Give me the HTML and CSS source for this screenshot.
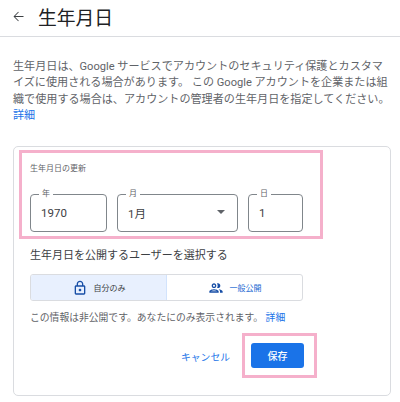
FILE: index.html
```html
<!DOCTYPE html>
<html lang="ja">
<head>
    <meta charset="UTF-8">
    <title>生年月日</title>
    <link rel="stylesheet" href="styles.css">
</head>
<body>
    <header class="top-bar">
        <svg class="back-icon" viewBox="0 0 24 24" width="15" height="15">
            <path d="M20 11.250H6.600l5.900-5.900-1-1L4 12l7.500 7.650 1-1-5.900-5.900H20z"/>
        </svg>
        <h1 class="page-title">生年月日</h1>
    </header>

    <p class="intro">
        生年月日は、Google サービスでアカウントのセキュリティ保護とカスタマイズに使用される場合があります。 この Google アカウントを企業または組織で使用する場合は、アカウントの管理者の生年月日を指定してください。
        <a class="link more-link" href="#">詳細</a>
    </p>

    <section class="card">
        <div class="highlight date-box">
            <div class="date-label">生年月日の更新</div>
            <div class="date-fields">
                <fieldset class="field field-year">
                    <legend>年</legend>
                    <span>1970</span>
                </fieldset>
                <fieldset class="field field-month">
                    <legend>月</legend>
                    <span>1月</span>
                    <i class="caret"></i>
                </fieldset>
                <fieldset class="field field-day">
                    <legend>日</legend>
                    <span>1</span>
                </fieldset>
            </div>
        </div>

        <h2 class="visibility-title">生年月日を公開するユーザーを選択する</h2>

        <div class="toggle">
            <div class="toggle-item active">
                <svg viewBox="0 0 24 24" width="16" height="16">
                    <path d="M18 8h-1V6c0-2.800-2.200-5-5-5S7 3.200 7 6v2H6c-1.100 0-2 .9-2 2v10c0 1.100.9 2 2 2h12c1.100 0 2-.9 2-2V10c0-1.100-.9-2-2-2zM9 6c0-1.700 1.300-3 3-3s3 1.300 3 3v2H9V6zm9 14H6V10h12v10zm-6-3c1.100 0 2-.9 2-2s-.9-2-2-2-2 .9-2 2 .9 2 2 2z"/>
                </svg>
                <span>自分のみ</span>
            </div>
            <div class="toggle-item">
                <svg viewBox="0 0 24 24" width="16" height="16">
                    <path d="M9 13.750c-2.300 0-7 1.200-7 3.500V19h14v-1.750c0-2.300-4.700-3.500-7-3.500zM4.300 17c.8-.6 2.900-1.250 4.700-1.250s3.900.65 4.700 1.250H4.300zM9 12c1.900 0 3.500-1.600 3.500-3.500S10.900 5 9 5 5.500 6.600 5.500 8.500 7.100 12 9 12zm0-5c.8 0 1.500.7 1.500 1.500S9.800 10 9 10s-1.500-.7-1.500-1.500S8.200 7 9 7zm7 6.800c1.200.9 2 2 2 3.450V19h4v-1.750c0-2-3.500-3.200-6-3.450zM15 12c1.900 0 3.500-1.600 3.500-3.500S16.900 5 15 5c-.5 0-1 .1-1.500.3.600.9 1 2 1 3.200s-.4 2.300-1 3.200c.5.200 1 .3 1.500.3z"/>
                </svg>
                <span>一般公開</span>
            </div>
        </div>

        <p class="info">この情報は非公開です。あなたにのみ表示されます。 <a class="link" href="#">詳細</a></p>

        <div class="actions">
            <a class="cancel" href="#">キャンセル</a>
            <div class="highlight save-box">
                <button class="save-btn">保存</button>
            </div>
        </div>
    </section>
</body>
</html>
```

FILE: styles.css
```css
* {
    margin: 0;
    padding: 0;
    box-sizing: border-box;
}

body {
    font-family: 'Roboto', 'Noto Sans CJK JP', sans-serif;
    background: #fff;
    color: #5f6368;
    width: 400px;
    height: 402px;
    overflow: hidden;
}

.top-bar {
    height: 37px;
    display: flex;
    align-items: center;
    padding: 0 0 3px 11px;
    border-bottom: 1px solid #dadce0;
}

.back-icon {
    fill: #3c4043;
}

.page-title {
    margin-left: 12px;
    font-size: 18.8px;
    font-weight: 400;
    color: #202124;
}

.intro {
    margin: 22px 0 0 13px;
    width: 378px;
    font-size: 11.1px;
    line-height: 16.3px;
}

.link {
    color: #1a73e8;
    text-decoration: none;
}

.more-link {
    display: block;
}

.card {
    margin: 22px 0 0 13px;
    width: 378px;
    height: 250px;
    border: 1px solid #dadce0;
    border-radius: 5px;
    padding: 3px 0 0 5px;
}

.highlight {
    border: 3px solid #f5b0cb;
}

.date-box {
    width: 304px;
    height: 89px;
    padding: 10px 0 0 8px;
}

.date-label {
    font-size: 8px;
    line-height: 12px;
}

.date-fields {
    display: flex;
    gap: 10px;
    margin-top: 14px;
}

.field {
    height: 43px;
    border: 1px solid #80868b;
    border-radius: 4px;
    padding: 0 10px;
    display: flex;
    align-items: center;
    font-size: 11.5px;
    color: #3c4043;
    position: relative;
}

.field legend {
    font-size: 8px;
    padding: 0 3px;
    margin-left: -2px;
    line-height: 10px;
    color: #5f6368;
}

.field span {
    margin-top: -5px;
}

.field-year {
    width: 77px;
}

.field-month {
    width: 121px;
}

.field-day {
    width: 55px;
}

.caret {
    position: absolute;
    right: 12px;
    top: 11px;
    border: 4px solid transparent;
    border-top-color: #5f6368;
    border-bottom: 0;
}

.visibility-title {
    margin: 9px 0 0 11px;
    font-size: 11px;
    font-weight: 400;
    line-height: 16px;
    color: #3c4043;
}

.toggle {
    display: flex;
    width: 273px;
    height: 27px;
    margin: 10px 0 0 11px;
    border: 1px solid #dadce0;
    border-radius: 3px;
    overflow: hidden;
}

.toggle-item {
    flex: 1;
    display: flex;
    align-items: center;
    justify-content: center;
    gap: 6px;
    font-size: 8px;
    color: #1967d2;
}

.toggle-item svg {
    fill: #174ea6;
}

.toggle-item.active {
    flex: 0 0 136px;
    background: #e8f0fe;
    border-right: 1px solid #d2e3fc;
    color: #3c4043;
}

.info {
    margin: 10px 0 0 11px;
    font-size: 9.8px;
    line-height: 14px;
}

.actions {
    display: flex;
    align-items: center;
    justify-content: flex-end;
    width: 298px;
    margin-top: 8px;
}

.cancel {
    font-size: 9.8px;
    color: #1a73e8;
    text-decoration: none;
    margin: 2px 12px 0 0;
}

.save-box {
    width: 75px;
    height: 45px;
    padding: 7px 10px 0 6px;
}

.save-btn {
    display: block;
    width: 53px;
    height: 25px;
    border: 0;
    border-radius: 3px;
    background: #1a73e8;
    color: #fff;
    font-family: inherit;
    font-size: 10px;
    font-weight: 500;
}
```
